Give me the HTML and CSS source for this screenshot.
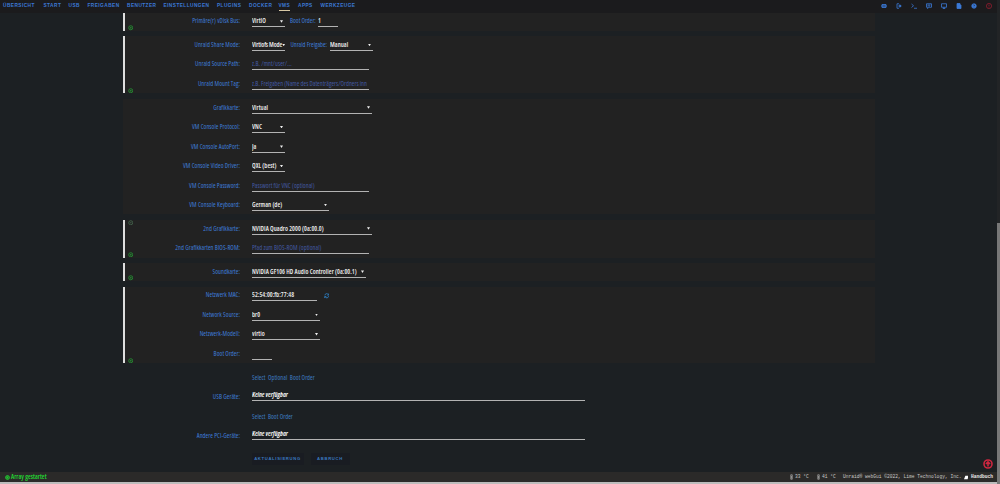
FILE: index.html
```html
<!DOCTYPE html>
<html lang="de">
<head>
<meta charset="utf-8">
<title>VMs</title>
<link rel="stylesheet" href="styles.css">
</head>
<body>
<header class="top">
  <nav class="nav">
    <a>ÜBERSICHT</a><a>START</a><a>USB</a><a>FREIGABEN</a><a>BENUTZER</a><a>EINSTELLUNGEN</a><a>PLUGINS</a><a>DOCKER</a><a><span class="active">VMS</span></a><a>APPS</a><a>WERKZEUGE</a>
  </nav>
  <div class="tools">
    <svg viewBox="0 0 12 12"><path d="M2 3h8v6H2zM0 6h12M4 2v8M8 2v8" /></svg>
    <svg viewBox="0 0 12 12"><path d="M6 1.500H2v9h4M4.500 6H8"/><path class="solid" d="M7.500 3.500L10.500 6 7.500 8.500z"/></svg>
    <svg viewBox="0 0 12 12"><path d="M1 2l4 3.5L1 9M6 10.5h6"/></svg>
    <svg viewBox="0 0 12 12"><path d="M1 1.500h10v7H6L3 11V8.500H1zM3 4h6M3 6h5"/></svg>
    <svg viewBox="0 0 12 12"><path d="M1 1.500h10v7H1zM3.500 11h5M6 8v3"/></svg>
    <svg viewBox="0 0 12 12"><path class="solid" d="M2 1h6v3h2v7H2z"/></svg>
    <svg viewBox="0 0 12 12"><circle class="solid" cx="6" cy="6" r="4.500"/><path class="mark" d="M4.500 4.500C5 3 7.500 3.500 7 5L6 6.200M6 7.500v1.300"/></svg>
    <svg class="alert" viewBox="0 0 12 12"><circle cx="6" cy="6" r="5.200"/><path d="M6 3v4M6 8v1.200"/></svg>
  </div>
</header>

<main class="page">
  <section class="group bar">
    <div class="row"><label>Primäre(r) vDisk Bus:</label><span class="select w33">VirtIO</span><label class="inline i1">Boot Order:</label><span class="input w20">1</span></div>
    <svg class="add" viewBox="0 0 10 10"><circle cx="5" cy="5" r="3.700"/><path d="M5 3.500v3M3.500 5h3"/></svg>
  </section>
  <section class="group bar">
    <div class="row"><label>Unraid Share Mode:</label><span class="select w33 tight">Virtiofs Mode</span><label class="inline i2">Unraid Freigabe:</label><span class="select w43">Manual</span></div>
    <div class="row"><label>Unraid Source Path:</label><span class="input w117 hint">z.B. /mnt/user/...</span></div>
    <div class="row"><label>Unraid Mount Tag:</label><span class="input w117 hint long">z.B. Freigaben (Name des Datenträgers/Ordners inn</span></div>
    <svg class="add" viewBox="0 0 10 10"><circle cx="5" cy="5" r="3.700"/><path d="M5 3.500v3M3.500 5h3"/></svg>
  </section>
  <section class="group">
    <div class="row"><label>Grafikkarte:</label><span class="select w120">Virtual</span></div>
    <div class="row"><label>VM Console Protocol:</label><span class="select w33">VNC</span></div>
    <div class="row"><label>VM Console AutoPort:</label><span class="select w33">Ja</span></div>
    <div class="row"><label>VM Console Video Driver:</label><span class="select w33">QXL (best)</span></div>
    <div class="row"><label>VM Console Password:</label><span class="input w117 hint">Passwort für VNC (optional)</span></div>
    <div class="row"><label>VM Console Keyboard:</label><span class="select w77">German (de)</span></div>
  </section>
  <section class="group bar">
    <svg class="add first" viewBox="0 0 10 10"><circle cx="5" cy="5" r="3.700"/><path d="M3.500 5h3"/></svg>
    <div class="row"><label>2nd Grafikkarte:</label><span class="select w120">NVIDIA Quadro 2000 (0a:00.0)</span></div>
    <div class="row"><label>2nd Grafikkarten BIOS-ROM:</label><span class="input w117 hint">Pfad zum BIOS-ROM (optional)</span></div>
    <svg class="add" viewBox="0 0 10 10"><circle cx="5" cy="5" r="3.700"/><path d="M5 3.500v3M3.500 5h3"/></svg>
  </section>
  <section class="group bar">
    <div class="row"><label>Soundkarte:</label><span class="select w114">NVIDIA GF106 HD Audio Controller (0a:00.1)</span></div>
    <svg class="add" viewBox="0 0 10 10"><circle cx="5" cy="5" r="3.700"/><path d="M5 3.500v3M3.500 5h3"/></svg>
  </section>
  <section class="group bar">
    <div class="row"><label>Netzwerk MAC:</label><span class="input w65">52:54:00:fb:77:48</span><svg class="refresh" viewBox="0 0 12 12"><path d="M2 5a4 4 0 0 1 7.500-1.500M10 7a4 4 0 0 1-7.500 1.500M10.500 1v3.500H7M1.500 11V7.500H5"/></svg></div>
    <div class="row"><label>Network Source:</label><span class="select w68">br0</span></div>
    <div class="row"><label>Netzwerk-Modell:</label><span class="select w68">virtio</span></div>
    <div class="row"><label>Boot Order:</label><span class="input w20"></span></div>
    <svg class="add" viewBox="0 0 10 10"><circle cx="5" cy="5" r="3.700"/><path d="M5 3.500v3M3.500 5h3"/></svg>
  </section>
  <section class="group plain">
    <div class="row"><label></label><span class="note">Select&nbsp; Optional&nbsp; Boot Order</span></div>
    <div class="row"><label>USB Geräte:</label><span class="input w333 none">Keine verfügbar</span></div>
    <div class="row"><label></label><span class="note">Select&nbsp; Boot Order</span></div>
    <div class="row"><label>Andere PCI-Geräte:</label><span class="input w333 none">Keine verfügbar</span></div>
    <div class="buttons"><button>AKTUALISIERUNG</button><button class="cancel">ABBRUCH</button></div>
  </section>
</main>

<svg class="to-top" viewBox="0 0 12 12"><circle cx="6" cy="6" r="4.800"/><path d="M6 9V3.500M3.500 6L6 3.500 8.500 6"/></svg>
<footer class="status">
  <span class="array"><svg class="run" viewBox="0 0 10 10"><circle cx="5" cy="5" r="3.700"/><path d="M4 3.500L6.500 5 4 6.500z"/></svg>Array gestartet</span>
  <span class="info">
    <svg class="temp" viewBox="0 0 6 12"><path d="M1.500 1.500h3v9h-3zM3 4v5"/></svg><span class="deg">33 °C</span>
    <svg class="temp" viewBox="0 0 6 12"><path d="M1.500 1.500h3v9h-3zM3 4v5"/></svg><span class="deg two">41 °C</span>
    <span class="copy">Unraid® webGui ©2022, Lime Technology, Inc.</span>
    <svg class="book" viewBox="0 0 10 10"><path d="M3 1h7L8 9H0z"/></svg><b>Handbuch</b>
  </span>
</footer>
<div class="scrollbar"><div class="thumb"></div></div>
</body>
</html>
```
FILE: styles.css
```css
* { box-sizing: border-box; }
body {
  margin: 0;
  width: 1000px;
  height: 484px;
  overflow: hidden;
  display: flex;
  flex-direction: column;
  background: #1c2023;
  color: #f0f0f0;
  font: 6.4px/8px "Open Sans", "Noto Sans", sans-serif;
  font-stretch: 84%;
  letter-spacing: .06px;
}
svg { display: block; flex: none; }

.top {
  flex: none;
  height: 12.75px;
  display: flex;
  justify-content: space-between;
  background: #1b1b1d;
  color: #3b79d6;
}
.nav {
  display: grid;
  grid-template-columns: 40.5px 25px 19px 39.5px 36.5px 53.5px 32px 29.5px 19.5px 22.5px 40px;
  padding-left: 3px;
  font: bold 4.8px/12.4px "Liberation Sans", sans-serif;
  letter-spacing: .42px;
  white-space: nowrap;
}
.active { display: inline-block; height: 10.5px; border-bottom: 1px solid #d8c8a4; }
.tools { display: flex; gap: 8.9px; padding: 2.6px 8.500px 0 0; }
.tools svg { width: 6px; height: 6px; fill: none; stroke: #3b79d6; stroke-width: 1.6; }
.tools .solid { fill: #3b79d6; }
.tools .mark { stroke: #1b1b1d; stroke-width: 1; }
.tools .alert { stroke: #b51f35; stroke-width: 1.2; }

.page { padding-left: 123px; display: flex; flex-direction: column; gap: 5.5px; }
.group {
  position: relative;
  width: 752px;
  background: #222;
  border-left: 2.500px solid transparent;
}
.bar { border-left-color: #dedede; }
.plain { background: none; margin-top: .4px; }
.row { height: 19.56px; display: flex; align-items: center; }
.row:first-of-type { margin-top: -1.2px; }
.row:nth-last-child(2) { margin-bottom: -.3px; }
.group:nth-of-type(3) .row:last-child { margin-bottom: -.3px; }
.plain .row { margin-bottom: 0; }
.row label { width: 115px; margin-right: 12px; text-align: right; color: #3f7edb; white-space: nowrap; }
.row label.inline { margin: 0; text-align: left; }
.row label.i1 { width: 33px; padding-left: 5px; letter-spacing: 0; }
.row label.i2 { width: 45px; padding-left: 5.500px; letter-spacing: 0; }
.select, .input {
  height: 12px;
  padding-top: 2px;
  border-bottom: 1px solid #b3b3b3;
  white-space: nowrap;
  overflow: hidden;
  font-weight: 550;
}
.select { display: flex; justify-content: space-between; padding-right: 2px; }
.select::after {
  content: "";
  flex: none;
  margin-top: 2.8px;
  width: 3px;
  height: 2.500px;
  background: #eee;
  clip-path: polygon(0 0, 100% 0, 50% 100%);
}
.tight { letter-spacing: -.1px; padding-right: 0; }
.row .hint { color: #435aa4; font-weight: 400; }
.hint.long { letter-spacing: .02px; }
.note { color: #3f7ec4; }
.row .none { height: 10px; margin-bottom: 2.6px; font-style: italic; font-weight: 700; padding-top: 0; letter-spacing: -.03px; }
.w20 { width: 20px; }
.w33 { width: 33px; }
.w43 { width: 43px; }
.w65 { width: 65px; }
.w68 { width: 68px; }
.w77 { width: 77px; }
.w114 { width: 114px; }
.w117 { width: 117px; }
.w120 { width: 120px; }
.w333 { width: 333px; }
.add { position: absolute; left: 2.800px; bottom: .2px; width: 5.500px; height: 5.500px; fill: none; stroke: #258832; stroke-width: 1.700; }
.add.first { top: 0; bottom: auto; stroke: #42604a; }
.refresh { width: 5.500px; height: 5.500px; margin: 2px 0 0 6.500px; fill: none; stroke: #2f83c8; stroke-width: 1.800; }
.buttons { display: flex; gap: 7px; margin: 6.3px 0 0 126.500px; }
button {
  width: 52px;
  height: 12px;
  padding: 0;
  border: 0;
  background: #191c22;
  color: #397ac0;
  font: bold 4.2px/12px "Liberation Sans", sans-serif;
  letter-spacing: .66px;
}
.cancel { width: 39px; }

.to-top { position: absolute; right: 7px; top: 459px; width: 10px; height: 10px; fill: none; stroke: #cf2740; stroke-width: 1.900; }
.status {
  position: absolute;
  left: 0;
  right: 0;
  bottom: 0;
  height: 12px;
  display: flex;
  justify-content: space-between;
  align-items: center;
  padding: 0 7px 0 5px;
  background: #2b2a29;
  border-bottom: 2px solid #bcbcbc;
}
.array { display: flex; align-items: center; gap: 1px; padding-top: .4px; color: #22dc33; font-weight: 600; letter-spacing: .06px; }
.run { width: 5px; height: 5px; fill: none; stroke: #22dc33; stroke-width: 2; }
.info { display: flex; align-items: center; padding-top: .5px; color: #c8c8c8; font: 4.600px/8px "Liberation Mono", monospace; letter-spacing: 0; white-space: nowrap; }
.temp { width: 3px; height: 6px; margin-right: 2px; fill: none; stroke: #bdbdbd; stroke-width: 1.200; }
.deg { width: 22px; }
.two { width: 21px; }
.book { width: 4.500px; height: 5px; margin: 0 2.500px 0 2.500px; fill: #fff; }
.info b { color: #e8e8e8; }

.scrollbar { position: absolute; right: 0; top: 0; bottom: 0; width: 3px; padding-top: 223px; background: #222426; }
.thumb { height: 261px; background: #777; }
```
